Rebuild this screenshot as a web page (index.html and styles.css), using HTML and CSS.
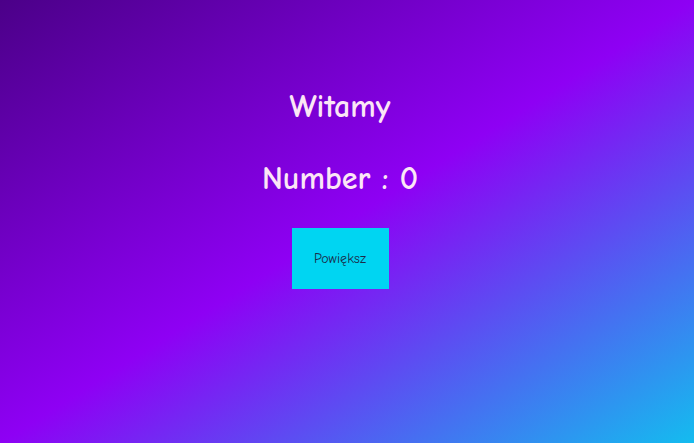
FILE: index.html
```html
<!DOCTYPE html>
<html lang="pl">
<head>
<meta charset="utf-8">
<title>Witamy</title>
<link rel="stylesheet" href="styles.css">
</head>
<body>
<main class="app">
  <h1 class="title">Witamy</h1>
  <h2 class="counter">Number : 0</h2>
  <button class="grow-btn" type="button">Powiększ</button>
</main>
</body>
</html>
```
FILE: styles.css
```css
html, body {
  margin: 0;
  height: 100%;
}
body {
  background: linear-gradient(to bottom right, #4b0088 0%, #8e00f4 50%, #14bcef 100%);
  font-family: "Comic Sans MS", "Comic Neue", cursive;
  color: #fce6f6;
}
.app {
  display: flex;
  flex-direction: column;
  align-items: center;
  padding: 88px 14px 0 0;
}
.title {
  margin: 0;
  font-size: 32px;
  font-weight: bold;
  line-height: 38px;
}
.counter {
  margin: 34px 0 0;
  font-size: 32px;
  font-weight: bold;
  line-height: 38px;
}
.grow-btn {
  margin-top: 30px;
  width: 97px;
  height: 61px;
  border: none;
  background: #00d5f2;
  color: #1c2a48;
  font-family: "Comic Sans MS", "Comic Neue", cursive;
  font-size: 14px;
  padding: 0;
}
```
